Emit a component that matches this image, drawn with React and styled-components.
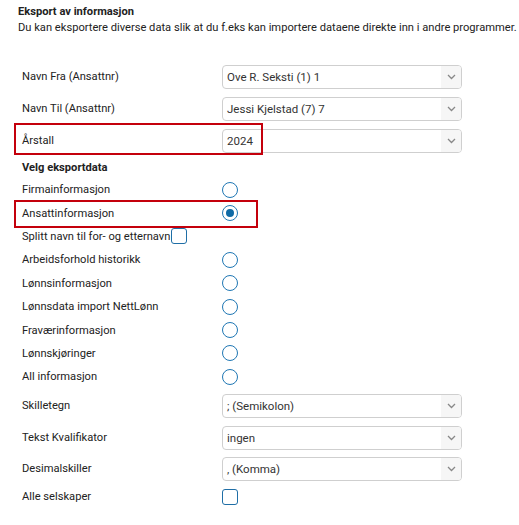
import React from "react";
import styled, { createGlobalStyle } from "styled-components";

const Global = createGlobalStyle`
  html, body { margin: 0; padding: 0; background: #fff; }
  body { font-family: Roboto, "Liberation Sans", Arial, sans-serif; font-size: 11.15px; color: #222; }
`;

const Page = styled.div`
  padding: 4px 0 0 18px;
  width: 501px;
`;

const Title = styled.div`
  font-weight: 700;
  line-height: 16px;
`;

const Intro = styled.div`
  line-height: 16px;
  white-space: nowrap;
`;

const Form = styled.div`
  display: flex;
  flex-direction: column;
  margin: ${(p) => p.$mt || 0}px 0 0 -4px;
`;

const SelectRow = styled.div`
  position: relative;
  display: grid;
  grid-template-columns: 200px 240px;
  align-items: center;
  padding-left: 8px;
  height: ${(p) => p.$h || 32}px;
  margin-top: ${(p) => p.$mt || 0}px;
`;

const Label = styled.span`
  line-height: 16px;
  white-space: nowrap;
`;

const Section = styled.div`
  font-weight: 700;
  padding-left: 8px;
  line-height: 16px;
  margin: ${(p) => p.$mt || 0}px 0 ${(p) => p.$mb || 0}px;
`;

const SelectBox = styled.div`
  height: 24px;
  border: 1px solid #cfcfcf;
  border-radius: 4px;
  box-sizing: border-box;
  display: flex;
  align-items: stretch;
  overflow: hidden;
  font-size: 11.5px;
  color: #333;
`;

const SelectValue = styled.span`
  flex: 1;
  display: flex;
  align-items: center;
  padding-left: 4px;
`;

const Chevron = styled.span`
  width: 20px;
  background: #f6f6f6;
  display: flex;
  align-items: center;
  justify-content: center;
`;

const OptRow = styled.div`
  position: relative;
  display: flex;
  align-items: center;
  padding-left: 8px;
  height: 23.4px;
`;

const OptLabel = styled.span`
  width: ${(p) => (p.$inline ? "auto" : "200px")};
  white-space: nowrap;
`;

const Radio = styled.span`
  width: 16px;
  height: 16px;
  box-sizing: border-box;
  border: 1.3px solid #1f77b4;
  border-radius: 50%;
  display: flex;
  align-items: center;
  justify-content: center;
  &::after {
    content: "";
    display: ${(p) => (p.$checked ? "block" : "none")};
    width: 8px;
    height: 8px;
    border-radius: 50%;
    background: #0f6aa6;
  }
`;

const Check = styled.span`
  width: 16px;
  height: 16px;
  box-sizing: border-box;
  border: 1.3px solid #1f6ea6;
  border-radius: 3px;
  margin-left: ${(p) => p.$ml || 0}px;
`;

const Highlight = styled.div`
  position: absolute;
  left: 0;
  top: ${(p) => p.$top}px;
  width: ${(p) => p.$w}px;
  height: ${(p) => p.$h}px;
  border: 2px solid #c4000c;
  box-sizing: border-box;
  pointer-events: none;
`;

const ChevronIcon = () => (
  <svg width="9" height="6" viewBox="0 0 9 6">
    <path d="M1 1 L4.5 4.5 L8 1" fill="none" stroke="#888" strokeWidth="1.3" />
  </svg>
);

const Select = ({ value }) => (
  <SelectBox>
    <SelectValue>{value}</SelectValue>
    <Chevron>
      <ChevronIcon />
    </Chevron>
  </SelectBox>
);

const options = [
  "Firmainformasjon",
  "Ansattinformasjon",
  null,
  "Arbeidsforhold historikk",
  "Lønnsinformasjon",
  "Lønnsdata import NettLønn",
  "Fraværinformasjon",
  "Lønnskjøringer",
  "All informasjon",
];

export default function App() {
  return (
    <Page>
      <Global />
      <Title>Eksport av informasjon</Title>
      <Intro>Du kan eksportere diverse data slik at du f.eks kan importere dataene direkte inn i andre programmer.</Intro>
      <Form $mt={25}>
        <SelectRow>
          <Label>Navn Fra (Ansattnr)</Label>
          <Select value="Ove R. Seksti (1) 1" />
        </SelectRow>
        <SelectRow>
          <Label>Navn Til (Ansattnr)</Label>
          <Select value="Jessi Kjelstad (7) 7" />
        </SelectRow>
        <SelectRow>
          <Label>Årstall</Label>
          <Select value="2024" />
          <Highlight $top={-2} $w={249} $h={32} />
        </SelectRow>
        <Section $mt={3} $mb={2}>Velg eksportdata</Section>
        {options.map((o, i) =>
          o === null ? (
            <OptRow key={i}>
              <OptLabel $inline>Splitt navn til for- og etternavn</OptLabel>
              <Check $ml={1} />
            </OptRow>
          ) : (
            <OptRow key={i}>
              <OptLabel>{o}</OptLabel>
              <Radio $checked={i === 1} />
              {i === 1 && <Highlight $top={-1} $w={244} $h={28} />}
            </OptRow>
          )
        )}
        <SelectRow $h={31.5} $mt={2}>
          <Label>Skilletegn</Label>
          <Select value="; (Semikolon)" />
        </SelectRow>
        <SelectRow $h={31.5}>
          <Label>Tekst Kvalifikator</Label>
          <Select value="ingen" />
        </SelectRow>
        <SelectRow $h={31.5}>
          <Label>Desimalskiller</Label>
          <Select value=", (Komma)" />
        </SelectRow>
        <OptRow>
          <OptLabel>Alle selskaper</OptLabel>
          <Check />
        </OptRow>
      </Form>
    </Page>
  );
}
